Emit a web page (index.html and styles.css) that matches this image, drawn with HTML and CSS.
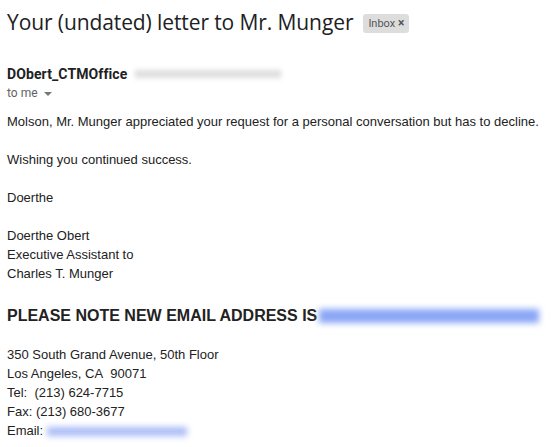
FILE: index.html
```html
<!DOCTYPE html>
<html>
<head>
<meta charset="utf-8">
<link rel="stylesheet" href="styles.css">
</head>
<body>
<div class="mail">
  <div class="subject-row">
    <h1 class="subject">Your (undated) letter to Mr. Munger</h1>
    <span class="label">Inbox <span class="x">×</span></span>
  </div>
  <div class="sender-row">
    <span class="sender">DObert_CTMOffice</span>
    <span class="blur-gray"></span>
  </div>
  <div class="to-row">to me <span class="caret"></span></div>
  <div class="body">
    <p>Molson, Mr. Munger appreciated your request for a personal conversation but has to decline.</p>
    <p>Wishing you continued success.</p>
    <p>Doerthe</p>
    <p>Doerthe Obert<br>Executive Assistant to<br>Charles T. Munger</p>
    <p class="note">PLEASE NOTE NEW EMAIL ADDRESS IS<span class="blur-blue wide"></span></p>
    <p>350 South Grand Avenue, 50th Floor<br>Los Angeles, CA&nbsp; 90071<br>Tel:&nbsp; (213) 624-7715<br>Fax: (213) 680-3677<br>Email: <span class="blur-blue small"></span></p>
  </div>
</div>
</body>
</html>
```

FILE: styles.css
```css
html, body {
  margin: 0;
  padding: 0;
  background: #fff;
}
.mail {
  padding: 0 7px;
}
.subject-row {
  display: flex;
  align-items: center;
  height: 44px;
  gap: 10px;
}
.subject {
  margin: 0;
  font-family: "Open Sans", Roboto, sans-serif;
  font-weight: 400;
  font-size: 21px;
  color: #202124;
  letter-spacing: -0.1px;
}
.label {
  background: #dddddd;
  color: #555;
  font-family: Roboto, sans-serif;
  font-size: 11px;
  border-radius: 3px;
  padding: 2px 5px;
  line-height: 14px;
  margin-top: 2px;
}
.label .x {
  font-weight: 700;
  font-size: 12px;
}
.sender-row {
  display: flex;
  align-items: center;
  margin-top: 20px;
  height: 20px;
}
.sender {
  font-family: Roboto, sans-serif;
  font-weight: 700;
  font-size: 14px;
  letter-spacing: 0.1px;
  color: #202124;
}
.blur-gray {
  display: inline-block;
  width: 146px;
  height: 8px;
  margin-left: 8px;
  background: #dedede;
  filter: blur(2.5px);
}
.to-row {
  font-family: Roboto, sans-serif;
  font-size: 12px;
  color: #5f6368;
  height: 18px;
  line-height: 18px;
}
.caret {
  display: inline-block;
  width: 0;
  height: 0;
  border-left: 4px solid transparent;
  border-right: 4px solid transparent;
  border-top: 4px solid #777;
  vertical-align: middle;
  margin-left: 3px;
}
.body {
  font-family: "Liberation Sans", Arial, sans-serif;
  font-size: 13px;
  line-height: 19px;
  color: #222;
  margin-top: 10px;
}
.body p {
  margin: 0 0 19px 0;
}
.note {
  font-weight: 700;
  font-size: 16px;
  line-height: 19px;
  padding-top: 4px;
  padding-bottom: 1px;
  display: flex;
  align-items: center;
}
.blur-blue {
  display: inline-block;
  background: #8aa6f6;
  filter: blur(3px);
  vertical-align: middle;
}
.blur-blue.wide {
  width: 220px;
  height: 14px;
  margin-left: 2px;
}
.blur-blue.small {
  width: 140px;
  height: 9px;
  background: #a9bbf7;
}
```
